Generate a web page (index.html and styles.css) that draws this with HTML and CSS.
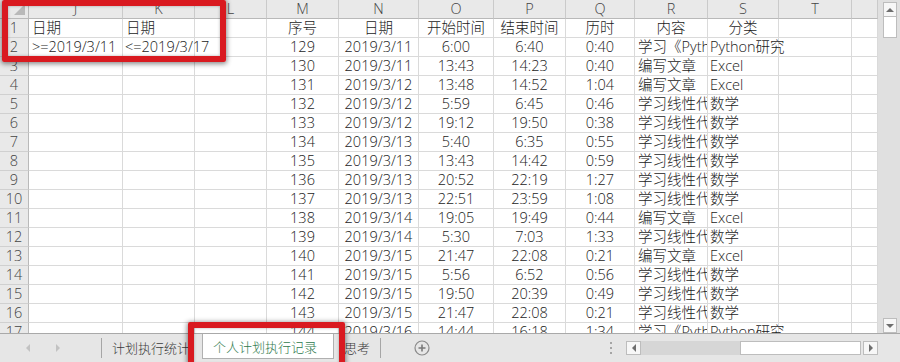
FILE: index.html
```html
<!DOCTYPE html>
<html lang="zh-CN">
<head>
<meta charset="utf-8">
<title>个人计划执行记录</title>
<link rel="stylesheet" href="styles.css">
</head>
<body>
<div class="main">
  <div class="sheet">
    <div class="row hdr">
      <div class="cell corner"><span class="tri"></span></div>
      <div class="cell">J</div><div class="cell">K</div><div class="cell">L</div><div class="cell">M</div><div class="cell">N</div><div class="cell">O</div><div class="cell">P</div><div class="cell">Q</div><div class="cell">R</div><div class="cell">S</div><div class="cell">T</div><div class="cell"></div>
    </div>
    <div class="row">
      <div class="cell rh">1</div><div class="cell">日期</div><div class="cell">日期</div><div class="cell"></div><div class="cell c">序号</div><div class="cell c">日期</div><div class="cell c">开始时间</div><div class="cell c">结束时间</div><div class="cell c">历时</div><div class="cell c">内容</div><div class="cell c">分类</div><div class="cell"></div><div class="cell"></div>
    </div>
    <div class="row">
      <div class="cell rh">2</div><div class="cell">&gt;=2019/3/11</div><div class="cell ov">&lt;=2019/3/17</div><div class="cell"></div><div class="cell c">129</div><div class="cell c">2019/3/11</div><div class="cell c">6:00</div><div class="cell c">6:40</div><div class="cell c">0:40</div><div class="cell">学习《Python编程》</div><div class="cell ov">Python研究</div><div class="cell"></div><div class="cell"></div>
    </div>
    <div class="row">
      <div class="cell rh">3</div><div class="cell"></div><div class="cell"></div><div class="cell"></div><div class="cell c">130</div><div class="cell c">2019/3/11</div><div class="cell c">13:43</div><div class="cell c">14:23</div><div class="cell c">0:40</div><div class="cell">编写文章</div><div class="cell ov">Excel</div><div class="cell"></div><div class="cell"></div>
    </div>
    <div class="row">
      <div class="cell rh">4</div><div class="cell"></div><div class="cell"></div><div class="cell"></div><div class="cell c">131</div><div class="cell c">2019/3/12</div><div class="cell c">13:48</div><div class="cell c">14:52</div><div class="cell c">1:04</div><div class="cell">编写文章</div><div class="cell ov">Excel</div><div class="cell"></div><div class="cell"></div>
    </div>
    <div class="row">
      <div class="cell rh">5</div><div class="cell"></div><div class="cell"></div><div class="cell"></div><div class="cell c">132</div><div class="cell c">2019/3/12</div><div class="cell c">5:59</div><div class="cell c">6:45</div><div class="cell c">0:46</div><div class="cell">学习线性代数</div><div class="cell ov">数学</div><div class="cell"></div><div class="cell"></div>
    </div>
    <div class="row">
      <div class="cell rh">6</div><div class="cell"></div><div class="cell"></div><div class="cell"></div><div class="cell c">133</div><div class="cell c">2019/3/12</div><div class="cell c">19:12</div><div class="cell c">19:50</div><div class="cell c">0:38</div><div class="cell">学习线性代数</div><div class="cell ov">数学</div><div class="cell"></div><div class="cell"></div>
    </div>
    <div class="row">
      <div class="cell rh">7</div><div class="cell"></div><div class="cell"></div><div class="cell"></div><div class="cell c">134</div><div class="cell c">2019/3/13</div><div class="cell c">5:40</div><div class="cell c">6:35</div><div class="cell c">0:55</div><div class="cell">学习线性代数</div><div class="cell ov">数学</div><div class="cell"></div><div class="cell"></div>
    </div>
    <div class="row">
      <div class="cell rh">8</div><div class="cell"></div><div class="cell"></div><div class="cell"></div><div class="cell c">135</div><div class="cell c">2019/3/13</div><div class="cell c">13:43</div><div class="cell c">14:42</div><div class="cell c">0:59</div><div class="cell">学习线性代数</div><div class="cell ov">数学</div><div class="cell"></div><div class="cell"></div>
    </div>
    <div class="row">
      <div class="cell rh">9</div><div class="cell"></div><div class="cell"></div><div class="cell"></div><div class="cell c">136</div><div class="cell c">2019/3/13</div><div class="cell c">20:52</div><div class="cell c">22:19</div><div class="cell c">1:27</div><div class="cell">学习线性代数</div><div class="cell ov">数学</div><div class="cell"></div><div class="cell"></div>
    </div>
    <div class="row">
      <div class="cell rh">10</div><div class="cell"></div><div class="cell"></div><div class="cell"></div><div class="cell c">137</div><div class="cell c">2019/3/13</div><div class="cell c">22:51</div><div class="cell c">23:59</div><div class="cell c">1:08</div><div class="cell">学习线性代数</div><div class="cell ov">数学</div><div class="cell"></div><div class="cell"></div>
    </div>
    <div class="row">
      <div class="cell rh">11</div><div class="cell"></div><div class="cell"></div><div class="cell"></div><div class="cell c">138</div><div class="cell c">2019/3/14</div><div class="cell c">19:05</div><div class="cell c">19:49</div><div class="cell c">0:44</div><div class="cell">编写文章</div><div class="cell ov">Excel</div><div class="cell"></div><div class="cell"></div>
    </div>
    <div class="row">
      <div class="cell rh">12</div><div class="cell"></div><div class="cell"></div><div class="cell"></div><div class="cell c">139</div><div class="cell c">2019/3/14</div><div class="cell c">5:30</div><div class="cell c">7:03</div><div class="cell c">1:33</div><div class="cell">学习线性代数</div><div class="cell ov">数学</div><div class="cell"></div><div class="cell"></div>
    </div>
    <div class="row">
      <div class="cell rh">13</div><div class="cell"></div><div class="cell"></div><div class="cell"></div><div class="cell c">140</div><div class="cell c">2019/3/15</div><div class="cell c">21:47</div><div class="cell c">22:08</div><div class="cell c">0:21</div><div class="cell">编写文章</div><div class="cell ov">Excel</div><div class="cell"></div><div class="cell"></div>
    </div>
    <div class="row">
      <div class="cell rh">14</div><div class="cell"></div><div class="cell"></div><div class="cell"></div><div class="cell c">141</div><div class="cell c">2019/3/15</div><div class="cell c">5:56</div><div class="cell c">6:52</div><div class="cell c">0:56</div><div class="cell">学习线性代数</div><div class="cell ov">数学</div><div class="cell"></div><div class="cell"></div>
    </div>
    <div class="row">
      <div class="cell rh">15</div><div class="cell"></div><div class="cell"></div><div class="cell"></div><div class="cell c">142</div><div class="cell c">2019/3/15</div><div class="cell c">19:50</div><div class="cell c">20:39</div><div class="cell c">0:49</div><div class="cell">学习线性代数</div><div class="cell ov">数学</div><div class="cell"></div><div class="cell"></div>
    </div>
    <div class="row">
      <div class="cell rh">16</div><div class="cell"></div><div class="cell"></div><div class="cell"></div><div class="cell c">143</div><div class="cell c">2019/3/15</div><div class="cell c">21:47</div><div class="cell c">22:08</div><div class="cell c">0:21</div><div class="cell">学习线性代数</div><div class="cell ov">数学</div><div class="cell"></div><div class="cell"></div>
    </div>
    <div class="row">
      <div class="cell rh">17</div><div class="cell"></div><div class="cell"></div><div class="cell"></div><div class="cell c">144</div><div class="cell c">2019/3/16</div><div class="cell c">14:44</div><div class="cell c">16:18</div><div class="cell c">1:34</div><div class="cell">学习《Python编程》</div><div class="cell ov">Python研究</div><div class="cell"></div><div class="cell"></div>
    </div>
  </div>
  <div class="vscroll">
    <div class="sbtn"><span class="arr up"></span></div>
    <div class="sthumb"></div>
    <div class="sfill"></div>
    <div class="sbtn"><span class="arr down"></span></div>
  </div>
</div>
<div class="tabbar">
  <div class="nav"><span class="arr left faint"></span><span class="arr right faint"></span></div>
  <div class="sep"></div>
  <div class="tab t1">计划执行统计</div>
  <div class="tab active">个人计划执行记录</div>
  <div class="tab t3">思考</div>
  <div class="sep"></div>
  <div class="plus"><svg width="16" height="16" viewBox="0 0 16 16"><circle cx="8" cy="8" r="7" fill="none" stroke="#8a8a8a" stroke-width="1.2"/><path d="M8 4.5v7M4.5 8h7" stroke="#7a7a7a" stroke-width="1.6"/></svg></div>
  <div class="fill"></div>
  <div class="dots"><i></i><i></i><i></i></div>
  <div class="hscroll">
    <div class="hbtn"><span class="arr left"></span></div>
    <div class="htrack"></div>
    <div class="hthumb"></div>
    <div class="hbtn"><span class="arr right"></span></div>
  </div>
</div>
<div class="hl hl-range"></div>
<div class="hl hl-tab"></div>
</body>
</html>
```
FILE: styles.css
```css
html, body {
  margin: 0;
  padding: 0;
}
body {
  width: 900px;
  height: 362px;
  overflow: hidden;
  position: relative;
  background: #ffffff;
  font-family: "Open Sans", "Noto Sans CJK SC", sans-serif;
  font-weight: 300;
}
.main {
  display: flex;
  height: 333px;
}
.sheet {
  width: 878px;
  height: 333px;
  overflow: hidden;
}
.row {
  display: grid;
  grid-template-columns: 29px 94px 72px 72px 72px 80px 75px 72px 69px 73px 71px 73px 26px;
  height: 19px;
}
.cell {
  box-sizing: border-box;
  height: 19px;
  border-right: 1px solid #dadada;
  border-bottom: 1px solid #dadada;
  font-size: 14.5px;
  line-height: 18px;
  padding: 0 3px;
  white-space: nowrap;
  overflow: hidden;
  color: #1a1a1a;
}
.c {
  text-align: center;
  padding: 0;
}
.ov {
  overflow: visible;
  padding-left: 2px;
}
.hdr .cell {
  background: #e9e9e9;
  color: #444444;
  text-align: center;
  padding: 0;
  border-right-color: #cacaca;
  border-bottom-color: #b9b9b9;
}
.hdr .corner {
  display: flex;
  justify-content: flex-end;
  align-items: flex-end;
  padding: 0 3px 3px 0;
  border-right-color: #b9b9b9;
}
.tri {
  width: 0;
  height: 0;
  border-left: 11px solid transparent;
  border-bottom: 11px solid #b9b9b9;
}
.rh {
  background: #e9e9e9;
  color: #444444;
  text-align: center;
  padding: 0;
  border-right-color: #b9b9b9;
  border-bottom-color: #d0d0d0;
}
.vscroll {
  width: 22px;
  height: 333px;
  background: #e0e0e0;
  display: flex;
  flex-direction: column;
  padding-left: 5px;
  box-sizing: border-box;
}
.sbtn {
  width: 14px;
  height: 15px;
  box-sizing: border-box;
  background: #f7f7f7;
  border: 1px solid #bdbdbd;
  display: flex;
  align-items: center;
  justify-content: center;
}
.vscroll .sbtn:first-child {
  margin-top: 2px;
}
.sthumb {
  width: 14px;
  height: 21px;
  box-sizing: border-box;
  background: #ffffff;
  border: 1px solid #bdbdbd;
  border-top: none;
}
.sfill {
  flex: 1;
}
.arr {
  width: 0;
  height: 0;
  display: block;
}
.arr.up {
  border-left: 4px solid transparent;
  border-right: 4px solid transparent;
  border-bottom: 4px solid #6e6e6e;
}
.arr.down {
  border-left: 4px solid transparent;
  border-right: 4px solid transparent;
  border-top: 4px solid #6e6e6e;
}
.arr.left {
  border-top: 4px solid transparent;
  border-bottom: 4px solid transparent;
  border-right: 4px solid #6e6e6e;
}
.arr.right {
  border-top: 4px solid transparent;
  border-bottom: 4px solid transparent;
  border-left: 4px solid #6e6e6e;
}
.arr.left.faint {
  border-right-color: #c2c2c2;
}
.arr.right.faint {
  border-left-color: #c2c2c2;
}
.tabbar {
  height: 28px;
  border-top: 1px solid #a9a9a9;
  background: #e6e6e6;
  display: flex;
  align-items: center;
  font-size: 13px;
  color: #3a3a3a;
}
.nav {
  width: 101px;
  display: flex;
  align-items: center;
  gap: 26px;
  padding-left: 26px;
  box-sizing: border-box;
}
.sep {
  width: 1px;
  height: 20px;
  background: #a6a6a6;
}
.tab {
  box-sizing: border-box;
  padding-left: 10px;
  white-space: nowrap;
  overflow: hidden;
  line-height: 20px;
}
.t1 {
  width: 100px;
}
.active {
  width: 132px;
  align-self: flex-start;
  height: 25px;
  line-height: 26px;
  background: #ffffff;
  border-left: 1px solid #b0b0b0;
  border-right: 1px solid #b0b0b0;
  border-bottom: 1px solid #b0b0b0;
  color: #2f7a4d;
}
.t3 {
  width: 46px;
}
.plus {
  margin-left: 33px;
  width: 16px;
  height: 16px;
}
.plus svg {
  display: block;
}
.fill {
  flex: 1;
}
.dots {
  display: flex;
  flex-direction: column;
  gap: 3px;
  margin-right: 14px;
}
.dots i {
  display: block;
  width: 2px;
  height: 2px;
  background: #a5a5a5;
}
.hscroll {
  display: flex;
  align-items: center;
  width: 252px;
  height: 14px;
  margin-right: 22px;
}
.hbtn {
  width: 15px;
  height: 14px;
  box-sizing: border-box;
  background: #f7f7f7;
  border: 1px solid #bdbdbd;
  display: flex;
  align-items: center;
  justify-content: center;
}
.htrack {
  width: 99px;
  height: 14px;
  background: #d6d6d6;
}
.hthumb {
  width: 121px;
  height: 14px;
  box-sizing: border-box;
  background: #ffffff;
  border: 1px solid #bdbdbd;
  margin-right: 2px;
}
.hl {
  position: absolute;
  box-sizing: border-box;
  border: 6px solid #d91a20;
  border-radius: 2px;
  box-shadow: 0 1px 5px 1px rgba(0, 0, 0, 0.45), inset 0 0 3px rgba(0, 0, 0, 0.3);
}
.hl-range {
  left: 2px;
  top: 0;
  width: 224px;
  height: 62px;
}
.hl-tab {
  left: 188px;
  top: 322px;
  width: 157px;
  height: 48px;
}
```
